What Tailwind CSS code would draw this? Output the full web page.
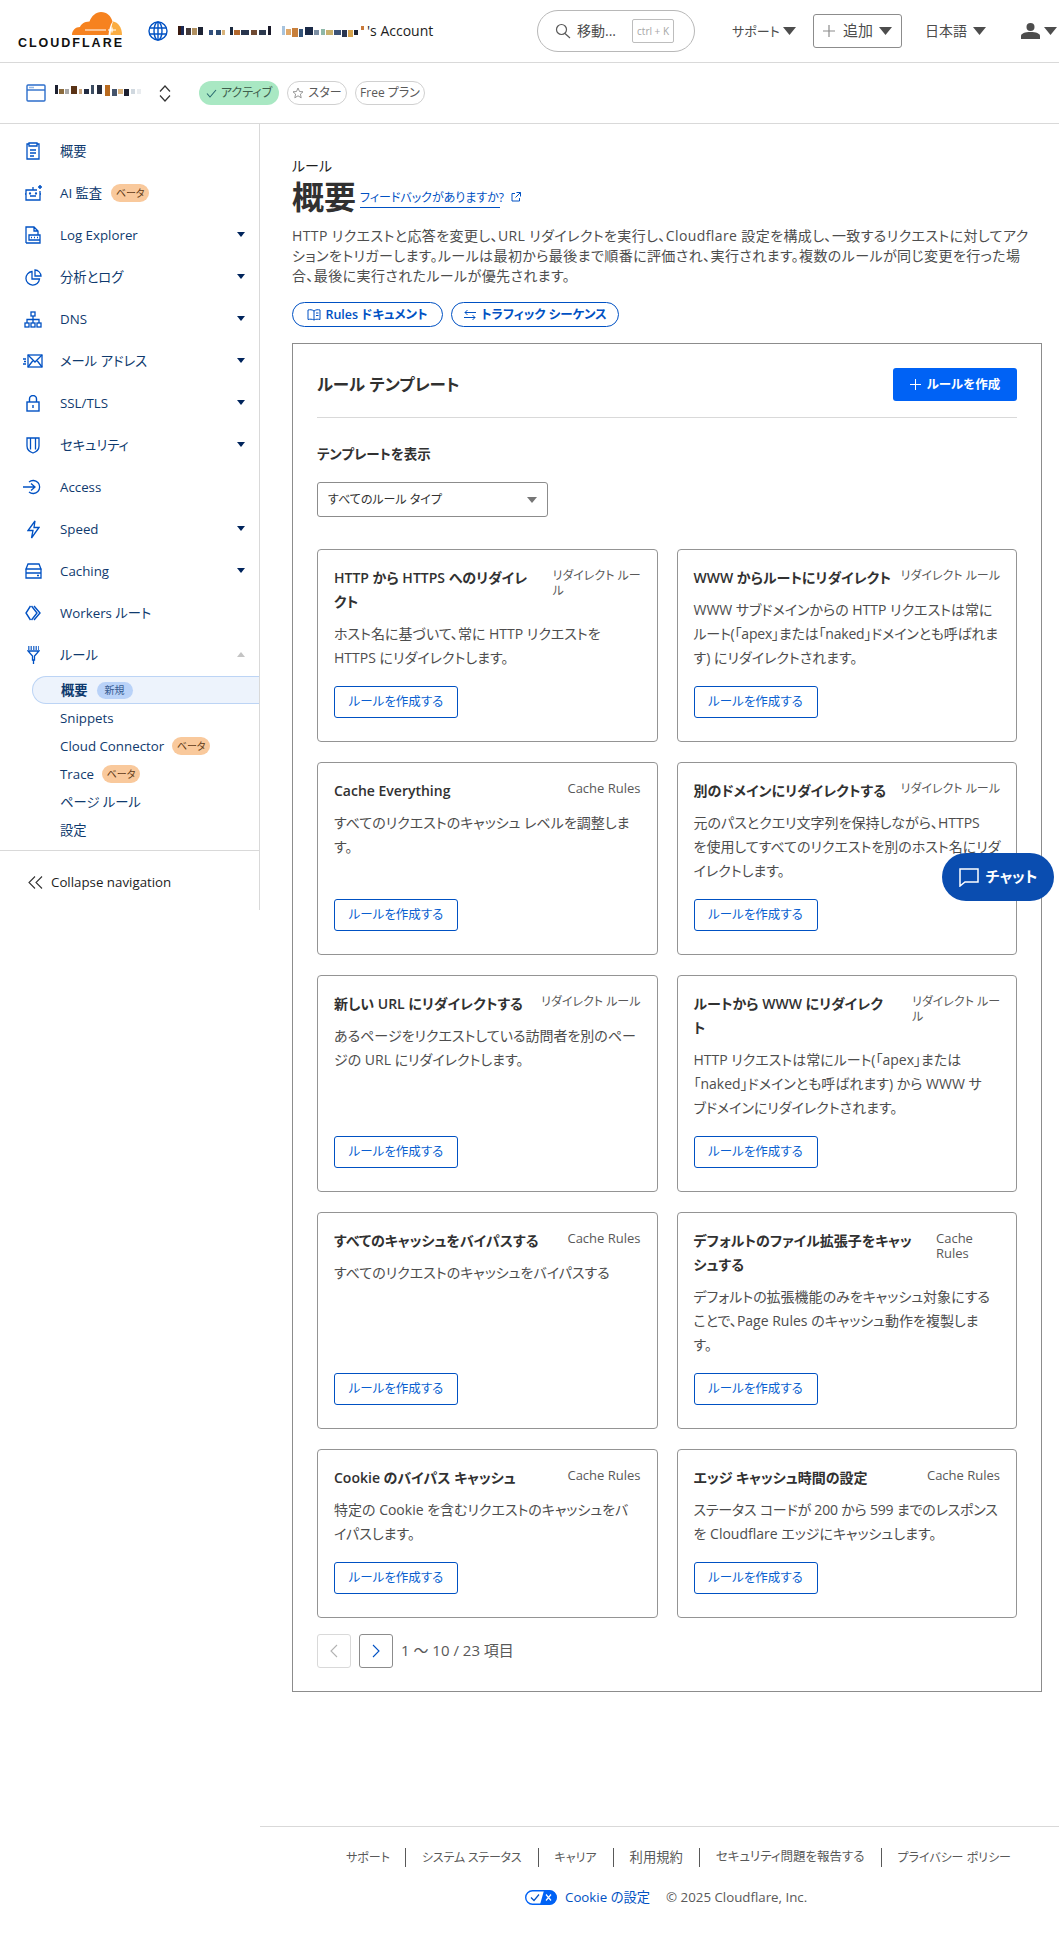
<!DOCTYPE html>
<html lang="ja">

<head>
    <meta charset="UTF-8">
    <meta name="viewport" content="width=device-width, initial-scale=1.0">
    <script src="https://cdn.jsdelivr.net/npm/@tailwindcss/browser@4"></script>
    <title>ルール</title>
</head>

<body class="relative bg-white text-[#313131] text-sm font-['Open_Sans','Noto_Sans_CJK_JP',sans-serif] [font-feature-settings:'palt'] h-[1950px] w-[1059px] overflow-hidden">

    <!-- top bar -->
    <header class="h-[63px] flex items-center border-b border-[#d9d9d9] pl-[17px]">
        <div class="w-[105px] flex flex-col items-end mt-[-2px]">
            <svg width="50" height="23" viewBox="0 0 50 23">
                <path fill="#f6821f" d="M0 23C0 18.500 3.500 15 8 15C9 12.500 12 9.500 17.500 9.500C19.500 4 24 0 29 0C35 0 39 4 40.500 9.500C38 13 37 18 36.500 23Z" />
                <path fill="#fbad41" d="M41 9.500C46 10 50 15.500 50 23H38.500C39 18 39.500 13.500 41 9.500Z" />
                <path fill="none" stroke="#fff" stroke-width="1.200" d="M13 18H34M36 18H44M40 15.500V20.500" />
            </svg>
            <span class="font-['Liberation_Sans',sans-serif] font-bold text-[12.500px] leading-[11px] tracking-[2px] mr-[-2px] mt-[3px] text-[#111]">CLOUDFLARE</span>
        </div>
        <svg class="ml-[26px]" width="20" height="20" viewBox="0 0 20 20" fill="none" stroke="#0051c3" stroke-width="1.400">
            <circle cx="10" cy="10" r="9" />
            <ellipse cx="10" cy="10" rx="4" ry="9" />
            <path d="M10 1V19M1.500 7H18.500M1.500 13H18.500" />
        </svg>
        <svg class="ml-[10px]" width="187" height="12" viewBox="0 0 187 12">
            <rect x="0" y="1" width="3" height="9" fill="#3a1a10" /><rect x="3" y="1" width="3" height="9" fill="#1b2a55" /><rect x="8" y="3" width="5" height="7" fill="#443a3a" /><rect x="14" y="3" width="5" height="7" fill="#b09060" /><rect x="20" y="2" width="5" height="8" fill="#1c2233" /><rect x="31" y="5" width="4" height="5" fill="#33507c" /><rect x="38" y="5" width="5" height="5" fill="#2c4a70" /><rect x="44" y="5" width="3" height="5" fill="#d9b37a" /><rect x="52" y="2" width="3" height="8" fill="#1c2a3f" /><rect x="56" y="5" width="6" height="5" fill="#b2682e" /><rect x="63" y="5" width="8" height="5" fill="#28354d" /><rect x="73" y="5" width="6" height="5" fill="#6f4a32" /><rect x="81" y="5" width="7" height="5" fill="#2d3a4f" /><rect x="90" y="1" width="3" height="9" fill="#1a1a2a" /><rect x="104" y="1" width="3" height="9" fill="#a7c3dd" /><rect x="108" y="4" width="5" height="6" fill="#e0a868" /><rect x="114" y="3" width="6" height="9" fill="#c8803c" /><rect x="121" y="4" width="4" height="8" fill="#36557a" /><rect x="127" y="2" width="8" height="8" fill="#1b2a47" /><rect x="136" y="5" width="5" height="5" fill="#7d8fa3" /><rect x="143" y="4" width="4" height="6" fill="#8fb8a8" /><rect x="148" y="5" width="7" height="5" fill="#c9b06c" /><rect x="156" y="5" width="7" height="5" fill="#3c5377" /><rect x="164" y="5" width="5" height="7" fill="#2a3550" /><rect x="170" y="5" width="5" height="7" fill="#d6a24c" /><rect x="176" y="5" width="4" height="5" fill="#1c2436" /><rect x="183" y="1" width="3" height="4" fill="#c97a3a" />
        </svg>
        <span class="w-[65px] ml-[2px] shrink-0 text-[#1d1d1d] whitespace-nowrap">'s Account</span>

        <div class="ml-[105px] w-[158px] h-[42px] shrink-0 flex items-center border border-[#b8b8b8] rounded-full pl-[17px]">
            <svg width="16" height="16" viewBox="0 0 16 16" fill="none" stroke="#595959" stroke-width="1.200"><circle cx="6.500" cy="6.500" r="5" /><path d="M10 10.500L15 15" /></svg>
            <span class="ml-[6px] text-[#4d4d4d] whitespace-nowrap">移動...</span>
            <span class="ml-[16px] w-[42px] h-[24px] flex items-center justify-center border border-[#bdbdbd] rounded-[2px] text-[10px] text-[#a6a6a6] whitespace-nowrap">ctrl + K</span>
        </div>

        <span class="ml-[37px] w-[45px] shrink-0 text-[13px] text-[#4d4d4d] whitespace-nowrap">サポート</span>
        <svg class="ml-[6px] shrink-0" width="13" height="8" viewBox="0 0 13 8"><path fill="#4d4d4d" d="M0 0H13L6.500 8Z" /></svg>
        <div class="ml-[17px] w-[89px] h-[34px] shrink-0 flex items-center border border-[#8c8c8c] rounded-[3px] pl-[9px]">
            <svg class="shrink-0" width="12" height="12" viewBox="0 0 13 13" stroke="#8c8c8c" stroke-width="1.300"><path d="M6.500 0V13M0 6.500H13" /></svg>
            <span class="ml-[8px] w-[30px] shrink-0 text-[15px] text-[#4d4d4d] whitespace-nowrap">追加</span>
            <svg class="ml-[6px] shrink-0" width="13" height="8" viewBox="0 0 13 8"><path fill="#4d4d4d" d="M0 0H13L6.500 8Z" /></svg>
        </div>
        <span class="ml-[23px] w-[42px] shrink-0 text-[#4d4d4d] whitespace-nowrap">日本語</span>
        <svg class="ml-[6px] shrink-0" width="13" height="8" viewBox="0 0 13 8"><path fill="#4d4d4d" d="M0 0H13L6.500 8Z" /></svg>
        <svg class="ml-[35px] shrink-0" width="19" height="16" viewBox="0 0 19 16"><circle cx="9.500" cy="4" r="4" fill="#4d4d4d" /><path fill="#4d4d4d" d="M0 16V13C0 10.500 4 9 9.500 9C15 9 19 10.500 19 13V16Z" /></svg>
        <svg class="ml-[4px] shrink-0" width="13" height="8" viewBox="0 0 13 8"><path fill="#4d4d4d" d="M0 0H13L6.500 8Z" /></svg>
    </header>

    <!-- zone bar -->
    <div class="h-[61px] flex items-center border-b border-[#d9d9d9] pl-[26px]">
        <svg width="20" height="18" viewBox="0 0 20 18" fill="none" stroke="#2c6ecb" stroke-width="1.400"><rect x="1" y="1" width="18" height="16" rx="1" /><path d="M1 6H19" /><path d="M3.500 3.500H8" stroke-dasharray="1 1" /></svg>
        <svg class="ml-[9px] mb-[4px]" width="87" height="12" viewBox="0 0 87 12">
            <rect x="0" y="0" width="3" height="9" fill="#1c2030" /><rect x="4" y="4" width="5" height="5" fill="#8a6a3c" /><rect x="10" y="4" width="4" height="5" fill="#a7a7a7" /><rect x="16" y="1" width="6" height="8" fill="#5a3316" /><rect x="24" y="4" width="3" height="5" fill="#caa57d" /><rect x="29" y="4" width="5" height="5" fill="#222c42" /><rect x="36" y="0" width="3" height="9" fill="#3d4e63" /><rect x="42" y="0" width="5" height="9" fill="#262d3d" /><rect x="50" y="0" width="5" height="11" fill="#b96b20" /><rect x="57" y="4" width="5" height="7" fill="#44536b" /><rect x="63" y="4" width="5" height="5" fill="#d8b07a" /><rect x="69" y="4" width="5" height="7" fill="#1c2030" /><rect x="76" y="4" width="4" height="5" fill="#d0d8df" /><rect x="82" y="4" width="4" height="5" fill="#e9ecef" />
        </svg>
        <svg class="ml-[17px]" width="12" height="17" viewBox="0 0 12 17" fill="none" stroke="#333" stroke-width="1.200"><path d="M1 6.500L6 1L11 6.500M1 10.500L6 16L11 10.500" /></svg>
        <span class="ml-[28px] h-[24px] w-[80px] flex items-center justify-center gap-[4px] rounded-full bg-[#a9e8c3] text-xs text-[#3f5f4d] whitespace-nowrap">
            <svg width="11" height="9" viewBox="0 0 11 9" fill="none" stroke="#2a6a6f" stroke-width="1.100"><path d="M1 4.500L4 8L10 1" /></svg>アクティブ
        </span>
        <span class="ml-[8px] h-[24px] w-[60px] flex items-center justify-center gap-[4px] rounded-full border border-[#d0d0d0] text-xs text-[#595959] whitespace-nowrap">
            <svg width="12" height="12" viewBox="0 0 12 12" fill="none" stroke="#8c8c8c" stroke-width="0.900"><path d="M6 1L7.500 4.500L11 4.800L8.400 7.100L9.200 10.800L6 8.800L2.800 10.800L3.600 7.100L1 4.800L4.500 4.500Z" /></svg>スター
        </span>
        <span class="ml-[8px] h-[24px] w-[70px] flex items-center justify-center rounded-full border border-[#d0d0d0] text-xs text-[#595959] whitespace-nowrap">Free プラン</span>
    </div>

    <div class="flex h-[1825px]">
        <!-- sidebar -->
        <nav class="w-[260px] h-[786px] shrink-0 border-r border-[#d9d9d9] pt-[6px] text-[13.300px] text-[#0f3a6e] relative">
            <a class="h-[42px] flex items-center">
                <span class="w-[60px] shrink-0 pl-[24px]"><svg width="18" height="18" viewBox="0 0 18 18" fill="none" stroke="#0051c3" stroke-width="1.300"><path d="M5 2H3V17H15V2H13M5 1H13V4H5ZM6 8H12M6 11H12M6 14H10" /></svg></span>概要
            </a>
            <a class="h-[42px] flex items-center">
                <span class="w-[60px] shrink-0 pl-[24px]"><svg width="20" height="18" viewBox="0 0 20 18" fill="none" stroke="#0051c3" stroke-width="1.300"><path d="M16 7V16H2V6H13M1 10H2M16 10H17M9 3V6M6 12H12" /><circle cx="6" cy="9.500" r="0.500" /><circle cx="12" cy="9.500" r="0.500" /><path d="M16 1V5M14 3H18" stroke-width="1.500" /></svg></span>AI 監査
                <span class="ml-[9px] h-[18px] w-[38px] flex items-center justify-center rounded-full bg-[#f9c99c] text-[10px] text-[#5f3a17]">ベータ</span>
            </a>
            <a class="h-[42px] flex items-center relative">
                <span class="w-[60px] shrink-0 pl-[25px]"><svg width="17" height="18" viewBox="0 0 17 18" fill="none" stroke="#0051c3" stroke-width="1.300"><path d="M1 17V1H9L13 5V9M9 1V5H13M1 17H15V9H4V14H15" /><path d="M6 11.500H7M9 11.500H10M12 11.500H13" /></svg></span>Log Explorer
                <svg class="absolute right-[14px] top-[18px]" width="8" height="5" viewBox="0 0 8 5"><path fill="#00245c" d="M0 0H8L4 5Z" /></svg>
            </a>
            <a class="h-[42px] flex items-center relative">
                <span class="w-[60px] shrink-0 pl-[25px]"><svg width="17" height="17" viewBox="0 0 17 17" fill="none" stroke="#0051c3" stroke-width="1.300"><path d="M7 2.500A6.800 6.800 0 1 0 14.500 10H7ZM10 1A6.500 6.500 0 0 1 16 7H10Z" /></svg></span>分析とログ
                <svg class="absolute right-[14px] top-[18px]" width="8" height="5" viewBox="0 0 8 5"><path fill="#00245c" d="M0 0H8L4 5Z" /></svg>
            </a>
            <a class="h-[42px] flex items-center relative">
                <span class="w-[60px] shrink-0 pl-[24px]"><svg width="18" height="17" viewBox="0 0 18 17" fill="none" stroke="#0051c3" stroke-width="1.300"><rect x="7" y="1" width="4" height="4" /><rect x="1" y="12" width="4" height="4" /><rect x="7" y="12" width="4" height="4" /><rect x="13" y="12" width="4" height="4" /><path d="M9 5V12M3 12V8.500H15V12" /></svg></span>DNS
                <svg class="absolute right-[14px] top-[18px]" width="8" height="5" viewBox="0 0 8 5"><path fill="#00245c" d="M0 0H8L4 5Z" /></svg>
            </a>
            <a class="h-[42px] flex items-center relative">
                <span class="w-[60px] shrink-0 pl-[23px]"><svg width="20" height="14" viewBox="0 0 20 14" fill="none" stroke="#0051c3" stroke-width="1.300"><rect x="5" y="1" width="14" height="12" /><path d="M5 1L12 8L19 1M5 13L10 6.500M19 13L14 6.500M0 5H3M1 7.500H3M0 10H3" /></svg></span>メール アドレス
                <svg class="absolute right-[14px] top-[18px]" width="8" height="5" viewBox="0 0 8 5"><path fill="#00245c" d="M0 0H8L4 5Z" /></svg>
            </a>
            <a class="h-[42px] flex items-center relative">
                <span class="w-[60px] shrink-0 pl-[26px]"><svg width="14" height="17" viewBox="0 0 14 17" fill="none" stroke="#0051c3" stroke-width="1.400"><rect x="1" y="7" width="12" height="9" /><path d="M3.500 7V4A3.500 3.500 0 0 1 10.500 4V7M7 10V13" /></svg></span>SSL/TLS
                <svg class="absolute right-[14px] top-[18px]" width="8" height="5" viewBox="0 0 8 5"><path fill="#00245c" d="M0 0H8L4 5Z" /></svg>
            </a>
            <a class="h-[42px] flex items-center relative">
                <span class="w-[60px] shrink-0 pl-[26px]"><svg width="14" height="17" viewBox="0 0 14 17" fill="none" stroke="#0051c3" stroke-width="1.300"><path d="M1 1H13V9C13 12.500 10 15 7 16C4 15 1 12.500 1 9ZM4.500 1V12.500M9.500 1V12.500" /></svg></span>セキュリティ
                <svg class="absolute right-[14px] top-[18px]" width="8" height="5" viewBox="0 0 8 5"><path fill="#00245c" d="M0 0H8L4 5Z" /></svg>
            </a>
            <a class="h-[42px] flex items-center">
                <span class="w-[60px] shrink-0 pl-[23px]"><svg width="19" height="16" viewBox="0 0 19 16" fill="none" stroke="#0051c3" stroke-width="1.300"><path d="M6 3A6.500 6.500 0 1 1 6 13M0 8H11M8 4.500L12 8L8 11.500" /></svg></span>Access
            </a>
            <a class="h-[42px] flex items-center relative">
                <span class="w-[60px] shrink-0 pl-[27px]"><svg width="13" height="19" viewBox="0 0 13 19" fill="none" stroke="#0051c3" stroke-width="1.300"><path d="M8 1L1 10.500H6L4.500 18L12 7.500H7Z" /></svg></span>Speed
                <svg class="absolute right-[14px] top-[18px]" width="8" height="5" viewBox="0 0 8 5"><path fill="#00245c" d="M0 0H8L4 5Z" /></svg>
            </a>
            <a class="h-[42px] flex items-center relative">
                <span class="w-[60px] shrink-0 pl-[25px]"><svg width="17" height="16" viewBox="0 0 17 16" fill="none" stroke="#0051c3" stroke-width="1.300"><path d="M1 6L3 1H14L16 6ZM1 6H16V10H1ZM1 10H16V15H1ZM12 12.500H14" /></svg></span>Caching
                <svg class="absolute right-[14px] top-[18px]" width="8" height="5" viewBox="0 0 8 5"><path fill="#00245c" d="M0 0H8L4 5Z" /></svg>
            </a>
            <a class="h-[42px] flex items-center">
                <span class="w-[60px] shrink-0 pl-[25px]"><svg width="16" height="16" viewBox="0 0 16 16" fill="none" stroke="#0051c3" stroke-width="1.400"><path d="M5.500 1L1 8L5.500 15M9 1L15 8L9 15M6.500 1L12 8L6.500 15" /></svg></span>Workers ルート
            </a>
            <a class="h-[42px] flex items-center relative">
                <span class="w-[60px] shrink-0 pl-[27px]"><svg width="13" height="19" viewBox="0 0 13 19" fill="none" stroke="#0051c3" stroke-width="1.300"><path d="M1 1H12M1 3H12" stroke-dasharray="1.500 1" /><path d="M1 5H12L7.500 10V14H5.500V10ZM6.500 14V18" /></svg></span>ルール
                <svg class="absolute right-[14px] top-[18px]" width="8" height="5" viewBox="0 0 8 5"><path fill="#c4c4c4" d="M0 5H8L4 0Z" /></svg>
            </a>

            <a class="ml-[32px] h-[28px] flex items-center rounded-l-full border border-r-0 border-[#bcd4f5] bg-[#edf3fc] pl-[28px] font-bold">
                概要
                <span class="ml-[9px] h-[17px] w-[36px] flex items-center justify-center rounded-full bg-[#b9d2f8] text-[10px] font-normal text-[#355a8f]">新規</span>
            </a>
            <a class="h-[28px] flex items-center pl-[60px]">Snippets</a>
            <a class="h-[28px] flex items-center pl-[60px]">
                Cloud Connector
                <span class="ml-[8px] h-[18px] w-[38px] flex items-center justify-center rounded-full bg-[#f9c99c] text-[10px] text-[#5f3a17]">ベータ</span>
            </a>
            <a class="h-[28px] flex items-center pl-[60px]">
                Trace
                <span class="ml-[8px] h-[18px] w-[38px] flex items-center justify-center rounded-full bg-[#f9c99c] text-[10px] text-[#5f3a17]">ベータ</span>
            </a>
            <a class="h-[28px] flex items-center pl-[60px]">ページ ルール</a>
            <a class="h-[28px] flex items-center pl-[60px]">設定</a>

            <div class="mt-[6px] border-t border-[#d9d9d9] h-[60px] flex items-center pl-[28px] pt-[3px] text-[#1d1d1d]">
                <svg width="15" height="13" viewBox="0 0 15 13" fill="none" stroke="#333" stroke-width="1.100"><path d="M7 0.500L1 6.500L7 12.500M14 0.500L8 6.500L14 12.500" /></svg>
                <span class="ml-[8px]">Collapse navigation</span>
            </div>
        </nav>

        <!-- main -->
        <main class="flex-1 flex flex-col">
            <div class="pl-8 pr-[17px] pt-[32px]">
                <p class="leading-5 text-[#1d1d1d]">ルール</p>
                <div class="flex items-center h-[34px] mt-[4px]">
                    <h1 class="text-[32px] font-semibold leading-[34px] text-[#313131]">概要</h1>
                    <a class="ml-[4px] mt-[2px] text-xs text-[#0051c3] border-b border-[#0051c3] leading-[18px] w-[140px] whitespace-nowrap">フィードバックがありますか?</a>
                    <svg class="ml-[11px]" width="10" height="10" viewBox="0 0 10 10" fill="none" stroke="#0051c3" stroke-width="1"><path d="M4 1.500H1V9H8.500V6M5.500 0.500H9.500V4.500M9.500 0.500L4.500 5.500" /></svg>
                </div>
                <p class="mt-[12px] leading-5 text-[#4d4d4d] whitespace-nowrap tracking-[0.4px]">HTTP リクエストと応答を変更し、URL リダイレクトを実行し、Cloudflare 設定を構成し、一致するリクエストに対してアク<br>ションをトリガーします。ルールは最初から最後まで順番に評価され、実行されます。複数のルールが同じ変更を行った場<br>合、最後に実行されたルールが優先されます。</p>
                <div class="flex gap-2 mt-4">
                    <a class="h-[25px] w-[151px] flex items-center justify-center gap-[4px] rounded-full border border-[#0051c3] text-[12.500px] font-semibold text-[#0051c3] whitespace-nowrap">
                        <svg width="14" height="12" viewBox="0 0 14 12" fill="none" stroke="#0051c3" stroke-width="1"><path d="M7 2V11M7 2C5 0.500 3 0.500 1 1V10.500C3 10 5 10 7 11C9 10 11 10 13 10.500V1C11 0.500 9 0.500 7 2ZM9 4H11.500M9 6.500H11.500" /></svg>Rules ドキュメント
                    </a>
                    <a class="h-[25px] w-[168px] flex items-center justify-center gap-[4px] rounded-full border border-[#0051c3] text-[12.500px] font-semibold text-[#0051c3] whitespace-nowrap">
                        <svg width="14" height="12" viewBox="0 0 14 12" fill="none" stroke="#0051c3" stroke-width="1"><path d="M13 3.500H2M4.500 1L2 3.500L4.500 6M1 8.500H12M9.500 6L12 8.500L9.500 11" /></svg>トラフィック シーケンス
                    </a>
                </div>

                <section class="mt-4 w-[750px] border border-[#8c8c8c] px-6 pt-6 pb-[23px]">
                    <div class="flex items-center justify-between h-[33px] mb-4 ">
                        <h2 class="text-[16.500px] font-semibold text-[#313131]">ルール テンプレート</h2>
                        <button class="w-[124px] h-[33px] flex items-center justify-center gap-[6px] rounded-[3px] bg-[#0062f5] text-[12.500px] font-semibold text-white whitespace-nowrap">
                            <svg width="11" height="11" viewBox="0 0 11 11" stroke="#fff" stroke-width="1"><path d="M5.500 0V11M0 5.500H11" /></svg>ルールを作成
                        </button>
                    </div>
                    <div class="border-t border-[#d9d9d9]"></div>
                    <p class="mt-[26px] leading-5 font-semibold text-[13.500px] text-[#313131]">テンプレートを表示</p>
                    <div class="mt-[18px] w-[231px] h-[35px] flex items-center justify-between border border-[#8c8c8c] rounded-[3px] pl-[10px] pr-[10px] text-xs text-[#313131]">
                        すべてのルール タイプ
                        <svg width="10" height="6" viewBox="0 0 10 6"><path fill="#767676" d="M0 0H10L5 6Z" /></svg>
                    </div>

                    <div class="mt-8 grid grid-cols-2 gap-x-[19px] gap-y-5">
                        <article class="flex flex-col border border-[#949494] rounded-[4px] pt-4 px-4 pb-[23px]">
                            <div class="flex justify-between gap-[8px]">
                                <h3 class="flex-1 font-semibold leading-6 text-[#313131]">HTTP から HTTPS へのリダイレ<br>クト</h3>
                                <span class="w-[88px] shrink-0 whitespace-nowrap text-xs leading-[15px] mt-[2px] text-[#595959]">リダイレクト ルー<br>ル</span>
                            </div>
                            <p class="mt-2 mb-4 leading-6 text-[#4d4d4d]">ホスト名に基づいて、常に HTTP リクエストを HTTPS にリダイレクトします。</p>
                            <a class="mt-auto w-[124px] h-[32px] flex items-center justify-center border border-[#0051c3] rounded-[3px] text-[12.500px] text-[#0a5fd0]">ルールを作成する</a>
                        </article>
                        <article class="flex flex-col border border-[#949494] rounded-[4px] pt-4 px-4 pb-[23px]">
                            <div class="flex justify-between gap-[8px]">
                                <h3 class="flex-1 font-semibold leading-6 text-[#313131] whitespace-nowrap">WWW からルートにリダイレクト</h3>
                                <span class="shrink-0 text-xs leading-[15px] mt-[2px] text-[#595959]">リダイレクト ルール</span>
                            </div>
                            <p class="mt-2 mb-4 leading-6 text-[#4d4d4d] whitespace-nowrap">WWW サブドメインからの HTTP リクエストは常に<br><span class="tracking-[-0.2px]">ルート(「apex」または「naked」ドメインとも呼ばれま</span><br>す) にリダイレクトされます。</p>
                            <a class="mt-auto w-[124px] h-[32px] flex items-center justify-center border border-[#0051c3] rounded-[3px] text-[12.500px] text-[#0a5fd0]">ルールを作成する</a>
                        </article>
                        <article class="flex flex-col border border-[#949494] rounded-[4px] pt-4 px-4 pb-[23px]">
                            <div class="flex justify-between gap-[8px]">
                                <h3 class="flex-1 font-semibold leading-6 text-[#313131]">Cache Everything</h3>
                                <span class="shrink-0 text-[13px] leading-[15px] mt-[2px] text-[#595959]">Cache Rules</span>
                            </div>
                            <p class="mt-2 mb-4 leading-6 text-[#4d4d4d]">すべてのリクエストのキャッシュ レベルを調整します。</p>
                            <a class="mt-auto w-[124px] h-[32px] flex items-center justify-center border border-[#0051c3] rounded-[3px] text-[12.500px] text-[#0a5fd0]">ルールを作成する</a>
                        </article>
                        <article class="flex flex-col border border-[#949494] rounded-[4px] pt-4 px-4 pb-[23px]">
                            <div class="flex justify-between gap-[8px]">
                                <h3 class="flex-1 font-semibold leading-6 text-[#313131]">別のドメインにリダイレクトする</h3>
                                <span class="shrink-0 text-xs leading-[15px] mt-[2px] text-[#595959]">リダイレクト ルール</span>
                            </div>
                            <p class="mt-2 mb-4 leading-6 text-[#4d4d4d] whitespace-nowrap">元のパスとクエリ文字列を保持しながら、HTTPS<br>を使用してすべてのリクエストを別のホスト名にリダ<br>イレクトします。</p>
                            <a class="mt-auto w-[124px] h-[32px] flex items-center justify-center border border-[#0051c3] rounded-[3px] text-[12.500px] text-[#0a5fd0]">ルールを作成する</a>
                        </article>
                        <article class="flex flex-col border border-[#949494] rounded-[4px] pt-4 px-4 pb-[23px]">
                            <div class="flex justify-between gap-[8px]">
                                <h3 class="flex-1 font-semibold leading-6 text-[#313131]">新しい URL にリダイレクトする</h3>
                                <span class="shrink-0 text-xs leading-[15px] mt-[2px] text-[#595959]">リダイレクト ルール</span>
                            </div>
                            <p class="mt-2 mb-4 leading-6 text-[#4d4d4d]">あるページをリクエストしている訪問者を別のページの URL にリダイレクトします。</p>
                            <a class="mt-auto w-[124px] h-[32px] flex items-center justify-center border border-[#0051c3] rounded-[3px] text-[12.500px] text-[#0a5fd0]">ルールを作成する</a>
                        </article>
                        <article class="flex flex-col border border-[#949494] rounded-[4px] pt-4 px-4 pb-[23px]">
                            <div class="flex justify-between gap-[8px]">
                                <h3 class="flex-1 font-semibold leading-6 text-[#313131]">ルートから WWW にリダイレク<br>ト</h3>
                                <span class="w-[88px] shrink-0 whitespace-nowrap text-xs leading-[15px] mt-[2px] text-[#595959]">リダイレクト ルー<br>ル</span>
                            </div>
                            <p class="mt-2 mb-4 leading-6 text-[#4d4d4d] whitespace-nowrap">HTTP リクエストは常にルート(「apex」または<br>「naked」ドメインとも呼ばれます) から WWW サ<br>ブドメインにリダイレクトされます。</p>
                            <a class="mt-auto w-[124px] h-[32px] flex items-center justify-center border border-[#0051c3] rounded-[3px] text-[12.500px] text-[#0a5fd0]">ルールを作成する</a>
                        </article>
                        <article class="flex flex-col border border-[#949494] rounded-[4px] pt-4 px-4 pb-[23px]">
                            <div class="flex justify-between gap-[8px]">
                                <h3 class="flex-1 font-semibold leading-6 text-[#313131]">すべてのキャッシュをバイパスする</h3>
                                <span class="shrink-0 text-[13px] leading-[15px] mt-[2px] text-[#595959]">Cache Rules</span>
                            </div>
                            <p class="mt-2 mb-4 leading-6 text-[#4d4d4d]">すべてのリクエストのキャッシュをバイパスする</p>
                            <a class="mt-auto w-[124px] h-[32px] flex items-center justify-center border border-[#0051c3] rounded-[3px] text-[12.500px] text-[#0a5fd0]">ルールを作成する</a>
                        </article>
                        <article class="flex flex-col border border-[#949494] rounded-[4px] pt-4 px-4 pb-[23px]">
                            <div class="flex justify-between gap-[8px]">
                                <h3 class="flex-1 font-semibold leading-6 text-[#313131]">デフォルトのファイル拡張子をキャッ<br>シュする</h3>
                                <span class="w-[64px] shrink-0 text-[13px] leading-[15px] mt-[2px] text-[#595959]">Cache Rules</span>
                            </div>
                            <p class="mt-2 mb-4 leading-6 text-[#4d4d4d] whitespace-nowrap">デフォルトの拡張機能のみをキャッシュ対象にする<br>ことで、Page Rules のキャッシュ動作を複製しま<br>す。</p>
                            <a class="mt-auto w-[124px] h-[32px] flex items-center justify-center border border-[#0051c3] rounded-[3px] text-[12.500px] text-[#0a5fd0]">ルールを作成する</a>
                        </article>
                        <article class="flex flex-col border border-[#949494] rounded-[4px] pt-4 px-4 pb-[23px]">
                            <div class="flex justify-between gap-[8px]">
                                <h3 class="flex-1 font-semibold leading-6 text-[#313131]">Cookie のバイパス キャッシュ</h3>
                                <span class="shrink-0 text-[13px] leading-[15px] mt-[2px] text-[#595959]">Cache Rules</span>
                            </div>
                            <p class="mt-2 mb-4 leading-6 text-[#4d4d4d]">特定の Cookie を含むリクエストのキャッシュをバイパスします。</p>
                            <a class="mt-auto w-[124px] h-[32px] flex items-center justify-center border border-[#0051c3] rounded-[3px] text-[12.500px] text-[#0a5fd0]">ルールを作成する</a>
                        </article>
                        <article class="flex flex-col border border-[#949494] rounded-[4px] pt-4 px-4 pb-[23px]">
                            <div class="flex justify-between gap-[8px]">
                                <h3 class="flex-1 font-semibold leading-6 text-[#313131]">エッジ キャッシュ時間の設定</h3>
                                <span class="shrink-0 text-[13px] leading-[15px] mt-[2px] text-[#595959]">Cache Rules</span>
                            </div>
                            <p class="mt-2 mb-4 leading-6 text-[#4d4d4d] whitespace-nowrap"><span class="tracking-[-0.2px]">ステータス コードが 200 から 599 までのレスポンス</span><br>を Cloudflare エッジにキャッシュします。</p>
                            <a class="mt-auto w-[124px] h-[32px] flex items-center justify-center border border-[#0051c3] rounded-[3px] text-[12.500px] text-[#0a5fd0]">ルールを作成する</a>
                        </article>
                    </div>

                    <div class="mt-4 flex items-center">
                        <span class="w-[34px] h-[34px] flex items-center justify-center border border-[#d9d9d9] rounded-[3px]"><svg width="8" height="14" viewBox="0 0 8 14" fill="none" stroke="#b3b3b3" stroke-width="1.100"><path d="M7 1L1 7L7 13" /></svg></span>
                        <span class="ml-2 w-[34px] h-[34px] flex items-center justify-center border border-[#8c8c8c] rounded-[3px]"><svg width="8" height="14" viewBox="0 0 8 14" fill="none" stroke="#0051c3" stroke-width="1.100"><path d="M1 1L7 7L1 13" /></svg></span>
                        <span class="ml-2 text-[15px] text-[#595959] whitespace-nowrap">1 〜 10 / 23 項目</span>
                    </div>
                </section>
            </div>

            <footer class="mt-auto h-[123px] border-t border-[#d9d9d9] text-xs text-[#595959]">
                <div class="mt-[21px] flex pl-[86px]">
                    <a class="h-[19px] flex items-center pr-[15px] border-r border-[#595959] whitespace-nowrap">サポート</a>
                    <a class="h-[19px] flex items-center px-4 border-r border-[#595959] whitespace-nowrap tracking-[-0.2px]">システム ステータス</a>
                    <a class="h-[19px] flex items-center px-4 border-r border-[#595959] whitespace-nowrap">キャリア</a>
                    <a class="h-[19px] flex items-center px-4 border-r border-[#595959] whitespace-nowrap text-[13.300px]">利用規約</a>
                    <a class="h-[19px] flex items-center px-4 border-r border-[#595959] whitespace-nowrap text-[12.500px]">セキュリティ問題を報告する</a>
                    <a class="h-[19px] flex items-center pl-4 whitespace-nowrap">プライバシー ポリシー</a>
                </div>
                <div class="mt-[22px] flex items-center pl-[265px]">
                    <svg width="32" height="15" viewBox="0 0 32 15">
                        <rect x="0.700" y="0.700" width="30.600" height="13.600" rx="6.800" fill="#fff" stroke="#0062f5" stroke-width="1.400" />
                        <path fill="#0062f5" d="M19 0.500H24.500A7 7 0 0 1 24.500 14.500H15Z" />
                        <path fill="none" stroke="#0051c3" stroke-width="1.200" d="M6 7.500L9 10.500L14 4.500" />
                        <path fill="none" stroke="#fff" stroke-width="1.200" d="M21 4.500L26 10.500M26 4.500L21 10.500" />
                    </svg>
                    <a class="ml-2 text-[13.300px] text-[#0051c3] whitespace-nowrap">Cookie の設定</a>
                    <span class="ml-4 text-[13.300px] text-[#595959] whitespace-nowrap">© 2025 Cloudflare, Inc.</span>
                </div>
            </footer>
        </main>
    </div>

    <!-- chat -->
    <button class="absolute left-[942px] top-[853px] w-[112px] h-[48px] flex items-center justify-center gap-[7px] rounded-[24px] bg-[#0a4db0] text-[15px] font-bold text-white">
        <svg width="20" height="20" viewBox="0 0 20 20" fill="none" stroke="#fff" stroke-width="1.500"><path d="M1 2H19V15H6L1 19Z" /></svg>チャット
    </button>
</body>

</html>
